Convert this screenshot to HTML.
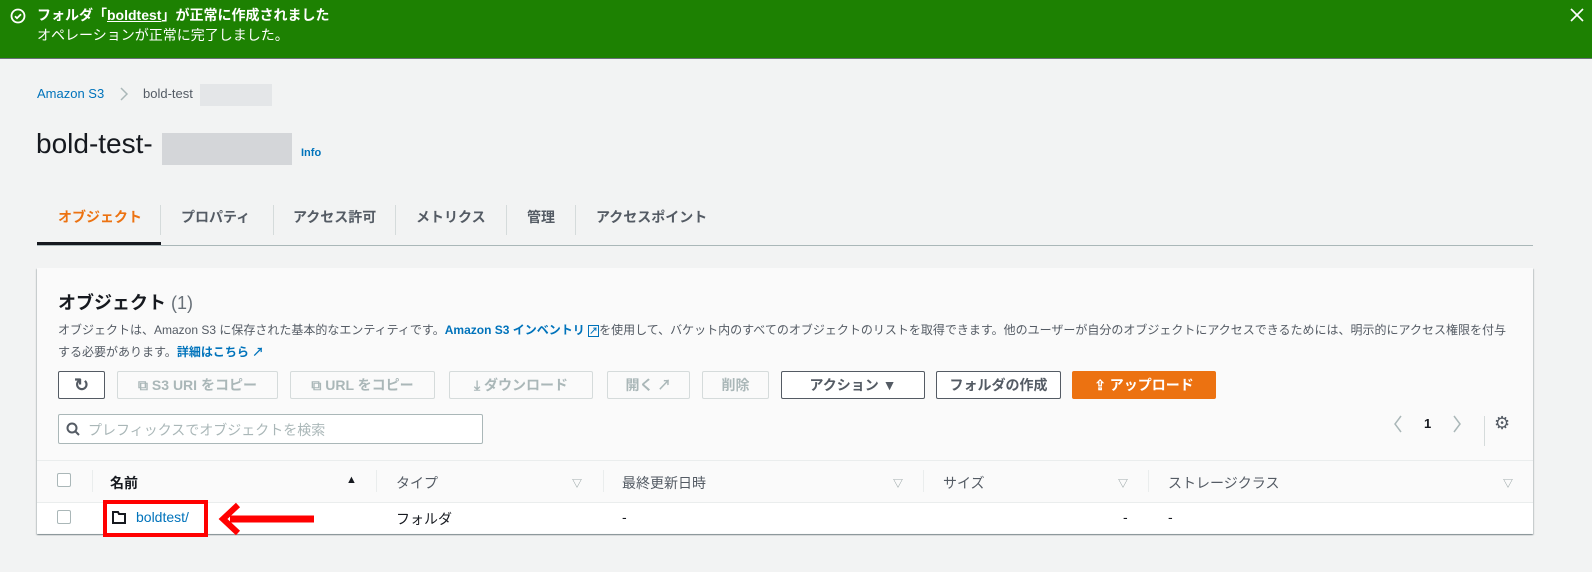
<!DOCTYPE html>
<html><head><meta charset="utf-8"><style>
*{box-sizing:border-box;margin:0;padding:0}
body{width:1592px;height:572px;background:#f2f3f3;font-family:"Liberation Sans","Noto Sans CJK JP",sans-serif;color:#16191f;position:relative;overflow:hidden;font-size:14px}
.a{position:absolute;white-space:nowrap}
.btn{position:absolute;top:371px;height:28px;border:1px solid #d5dbdb;border-radius:2px;background:#fafafa;color:#aab7b8;font-weight:bold;font-size:14px;display:flex;align-items:center;justify-content:center;gap:6px}
.btn.d{border-color:#545b64;color:#545b64;background:#fff}
.sep{position:absolute;width:1px;background:#d5dbdb}
.tri{color:#879596;font-size:10px}
</style></head><body>
<div class="a" style="left:0;top:0;width:1592px;height:59px;background:#1d8102;border-bottom:1px solid #687078"></div>
<svg class="a" style="left:10px;top:8px" width="16" height="16" viewBox="0 0 16 16"><circle cx="8" cy="8" r="6.5" fill="none" stroke="#fff" stroke-width="1.8"/><path d="M5 8.2l2 2 4-4" fill="none" stroke="#fff" stroke-width="1.8"/></svg>
<div class="a" style="left:37px;top:5px;color:#fff;font-weight:bold;font-size:14px">フォルダ「<u>boldtest</u>」が正常に作成されました</div>
<div class="a" style="left:37px;top:25px;color:#fff;font-size:14px">オペレーションが正常に完了しました。</div>
<svg class="a" style="left:1570px;top:8px" width="14" height="14"><path d="M1 1l12 12M13 1L1 13" stroke="#fff" stroke-width="1.6"/></svg>

<div class="a" style="left:37px;top:86px;color:#0073bb;font-size:13px">Amazon S3</div>
<svg class="a" style="left:119px;top:87px" width="10" height="14"><path d="M2 1l6 6-6 6" fill="none" stroke="#aab7b8" stroke-width="1.5"/></svg>
<div class="a" style="left:143px;top:86px;color:#545b64;font-size:13px">bold-test</div>
<div class="a" style="left:200px;top:84px;width:72px;height:22px;background:#e4e6e8"></div>
<div class="a" style="left:36px;top:128px;font-size:28px">bold-test-</div>
<div class="a" style="left:162px;top:133px;width:130px;height:32px;background:#d4d6d9"></div>
<div class="a" style="left:301px;top:147px;color:#0073bb;font-size:11px;font-weight:bold">Info</div>

<div class="a" style="left:58px;top:207px;color:#ec7211;font-weight:bold;font-size:14px">オブジェクト</div>
<div class="a" style="left:37px;top:242px;width:124px;height:3px;background:#16191f"></div>
<div class="sep" style="left:160px;top:205px;height:30px"></div>
<div class="a" style="left:181px;top:207px;color:#545b64;font-weight:bold">プロパティ</div>
<div class="sep" style="left:273px;top:205px;height:30px"></div>
<div class="a" style="left:293px;top:207px;color:#545b64;font-weight:bold">アクセス許可</div>
<div class="sep" style="left:395px;top:205px;height:30px"></div>
<div class="a" style="left:416px;top:207px;color:#545b64;font-weight:bold">メトリクス</div>
<div class="sep" style="left:506px;top:205px;height:30px"></div>
<div class="a" style="left:527px;top:207px;color:#545b64;font-weight:bold">管理</div>
<div class="sep" style="left:575px;top:205px;height:30px"></div>
<div class="a" style="left:596px;top:207px;color:#545b64;font-weight:bold">アクセスポイント</div>
<div class="a" style="left:37px;top:245px;width:1496px;height:1px;background:#aab7b8"></div>

<div class="a" style="left:37px;top:268px;width:1496px;height:266px;background:#fafafa;box-shadow:0 1px 1px 0 rgba(0,28,36,.3),1px 1px 1px 0 rgba(0,28,36,.15),-1px 1px 1px 0 rgba(0,28,36,.15)"></div>
<div class="a" style="left:58px;top:289px;font-size:18px;font-weight:bold">オブジェクト <span style="font-weight:normal;color:#687078">(1)</span></div>
<div class="a" style="left:58px;top:321px;font-size:12px;color:#545b64">オブジェクトは、Amazon S3 に保存された基本的なエンティティです。<b style="color:#0073bb">Amazon S3 インベントリ <span style="border:1.5px solid #0073bb;font-size:9px">↗</span></b>を使用して、バケット内のすべてのオブジェクトのリストを取得できます。他のユーザーが自分のオブジェクトにアクセスできるためには、明示的にアクセス権限を付与</div>
<div class="a" style="left:58px;top:343px;font-size:12px;color:#545b64">する必要があります。<b style="color:#0073bb">詳細はこちら ↗</b></div>

<div class="btn d" style="left:58px;width:47px;font-size:18px">↻</div>
<div class="btn" style="left:117px;width:161px">⧉ S3 URI をコピー</div>
<div class="btn" style="left:290px;width:145px">⧉ URL をコピー</div>
<div class="btn" style="left:449px;width:144px">⤓ ダウンロード</div>
<div class="btn" style="left:607px;width:83px">開く ↗</div>
<div class="btn" style="left:702px;width:67px">削除</div>
<div class="btn d" style="left:781px;width:144px">アクション ▼</div>
<div class="btn d" style="left:936px;width:125px">フォルダの作成</div>
<div class="btn" style="left:1072px;width:144px;background:#ec7211;border-color:#ec7211;color:#fff">⇪ アップロード</div>

<div class="a" style="left:58px;top:414px;width:425px;height:30px;border:1px solid #aab7b8;border-radius:2px;background:#fff"></div>
<svg class="a" style="left:66px;top:422px" width="14" height="14"><circle cx="6" cy="6" r="4.5" fill="none" stroke="#545b64" stroke-width="2"/><path d="M9 9l4 4" stroke="#545b64" stroke-width="2"/></svg>
<div class="a" style="left:88px;top:420px;color:#aab7b8;font-size:14px">プレフィックスでオブジェクトを検索</div>
<svg class="a" style="left:1393px;top:415px" width="10" height="18"><path d="M8 1L2 9l6 8" fill="none" stroke="#aab7b8" stroke-width="1.5"/></svg>
<div class="a" style="left:1424px;top:416px;font-weight:bold;font-size:13px">1</div>
<svg class="a" style="left:1452px;top:415px" width="10" height="18"><path d="M2 1l6 8-6 8" fill="none" stroke="#aab7b8" stroke-width="1.5"/></svg>
<div class="sep" style="left:1484px;top:416px;height:30px"></div>
<div class="a" style="left:1494px;top:413px;font-size:18px;color:#545b64">⚙</div>

<div class="a" style="left:37px;top:460px;width:1496px;height:1px;background:#eaeded"></div>
<div class="a" style="left:37px;top:502px;width:1496px;height:31px;background:#fff;border-top:1px solid #eaeded"></div>
<div class="a" style="left:57px;top:473px;width:14px;height:14px;border:1px solid #aab7b8;border-radius:2px;background:#fff"></div>
<div class="a" style="left:57px;top:510px;width:14px;height:14px;border:1px solid #aab7b8;border-radius:2px;background:#fff"></div>
<div class="sep" style="left:92px;top:470px;height:22px;background:#eaeded"></div>
<div class="a" style="left:110px;top:473px;font-weight:bold;font-size:14px">名前</div>
<div class="a" style="left:346px;top:474px;font-size:11px">▲</div>
<div class="sep" style="left:376px;top:470px;height:22px;background:#eaeded"></div>
<div class="a" style="left:396px;top:473px;color:#545b64">タイプ</div>
<div class="a tri" style="left:572px;top:475px">▽</div>
<div class="sep" style="left:603px;top:470px;height:22px;background:#eaeded"></div>
<div class="a" style="left:622px;top:473px;color:#545b64">最終更新日時</div>
<div class="a tri" style="left:893px;top:475px">▽</div>
<div class="sep" style="left:923px;top:470px;height:22px;background:#eaeded"></div>
<div class="a" style="left:943px;top:473px;color:#545b64">サイズ</div>
<div class="a tri" style="left:1118px;top:475px">▽</div>
<div class="sep" style="left:1148px;top:470px;height:22px;background:#eaeded"></div>
<div class="a" style="left:1168px;top:473px;color:#545b64">ストレージクラス</div>
<div class="a tri" style="left:1503px;top:475px">▽</div>

<svg class="a" style="left:112px;top:510px" width="14" height="14"><path d="M1 2h5l1 2h6v9H1z" fill="none" stroke="#16191f" stroke-width="2"/></svg>
<div class="a" style="left:136px;top:509px;color:#0073bb;font-size:14px">boldtest/</div>
<div class="a" style="left:396px;top:509px">フォルダ</div>
<div class="a" style="left:622px;top:509px">-</div>
<div class="a" style="left:1123px;top:509px">-</div>
<div class="a" style="left:1168px;top:509px">-</div>
<div class="a" style="left:103px;top:500px;width:105px;height:37px;border:4px solid #f00"></div>
<svg class="a" style="left:218px;top:502px" width="98" height="34"><path d="M96 17H12" stroke="#f00" stroke-width="7"/><path d="M20 3L5 17l15 14" fill="none" stroke="#f00" stroke-width="6"/></svg>
</body></html>
